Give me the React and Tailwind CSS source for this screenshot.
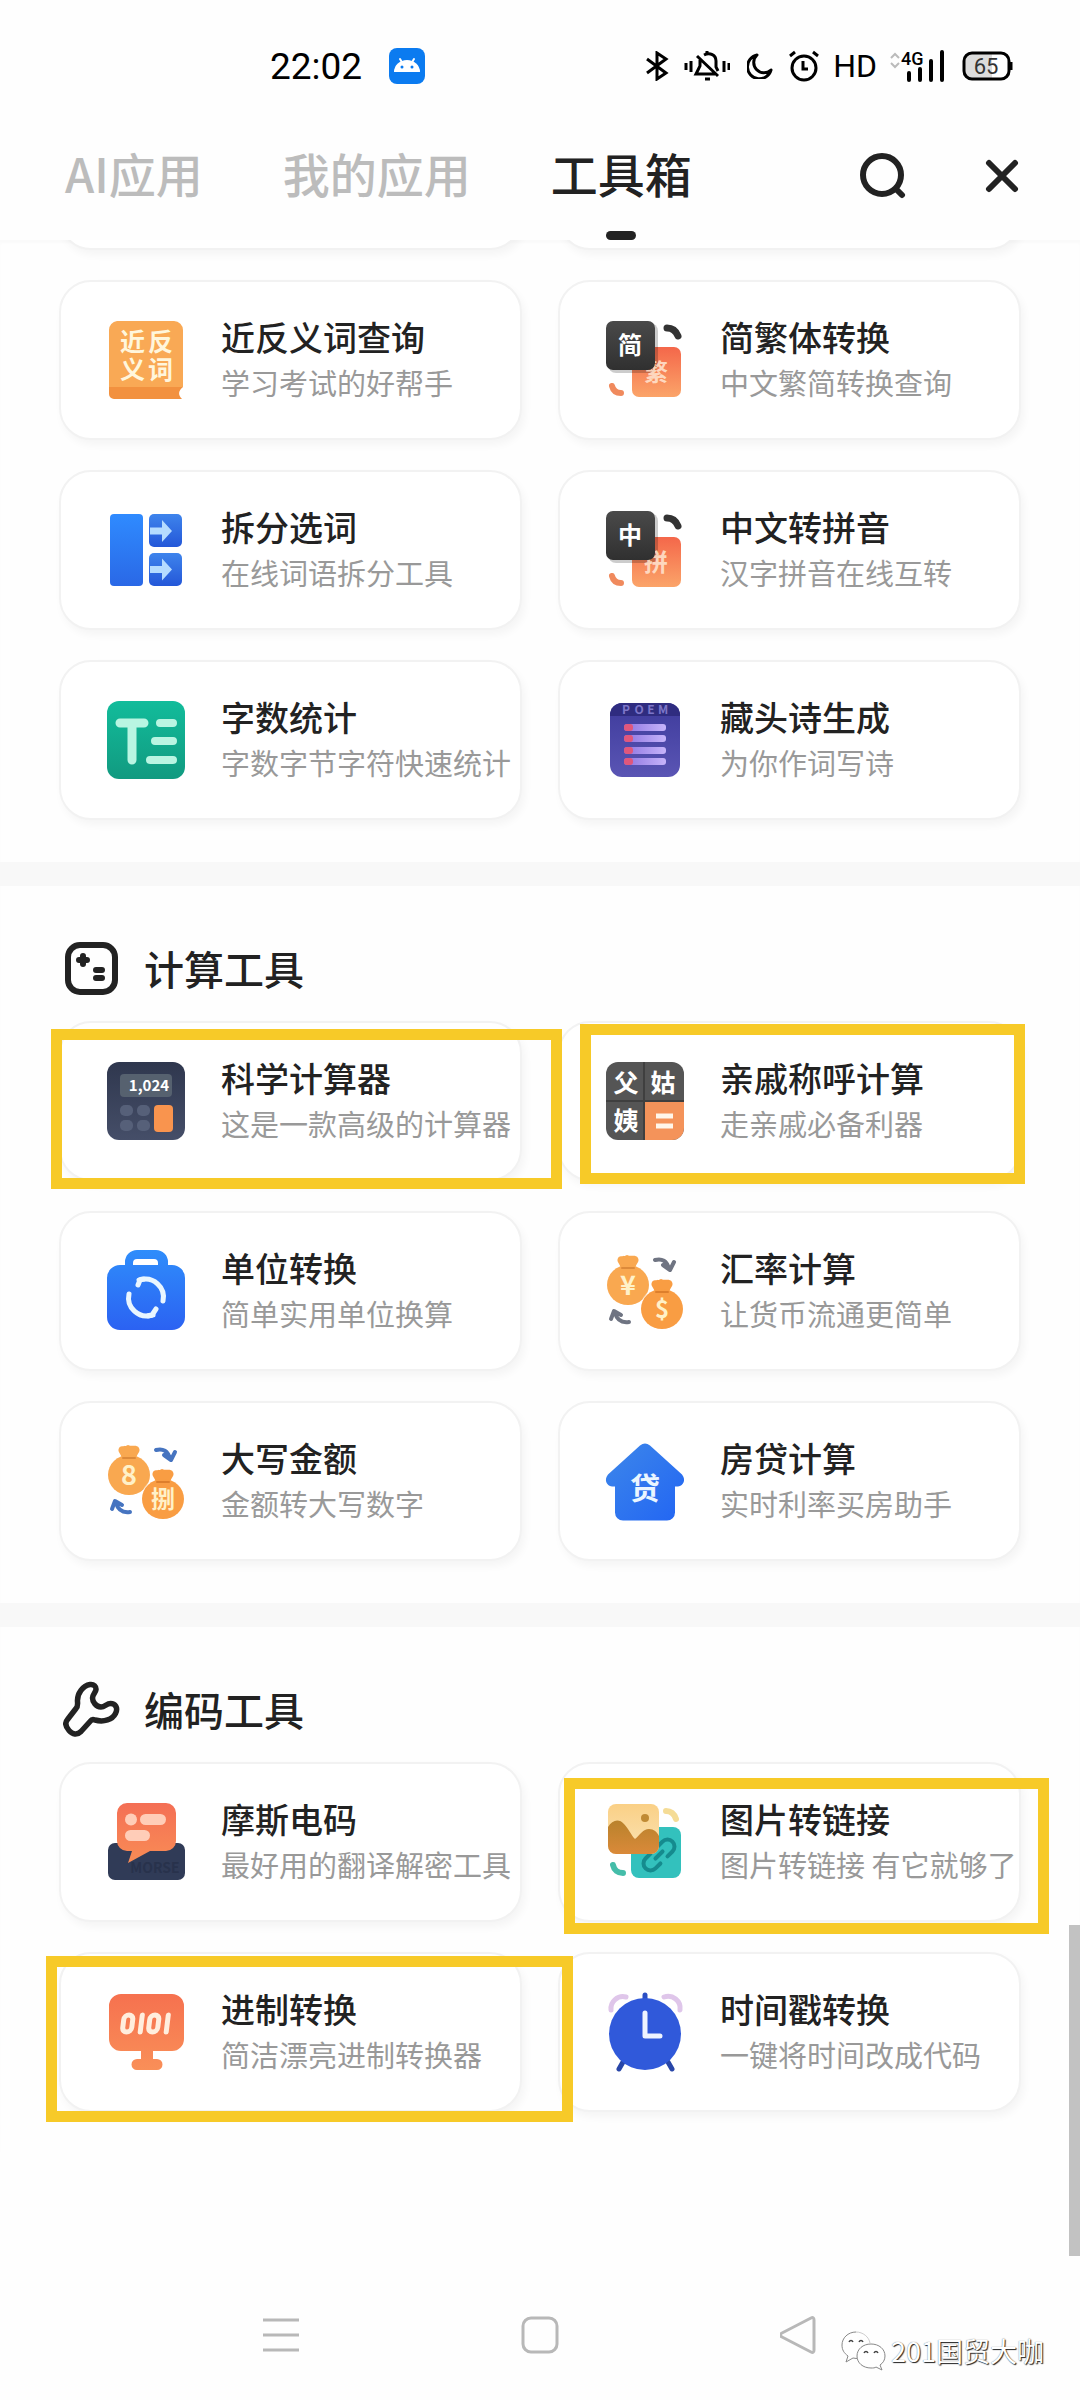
import React from "react";

/* ---------- shared glyph text for the illustrated icons ---------- */

function Glyph({ x, y, size = 24, fill = "#fff", opacity = 1, children }) {
  return (
    <text
      x={x}
      y={y}
      fontSize={size}
      fontWeight="700"
      textAnchor="middle"
      fill={fill}
      fillOpacity={opacity}
    >
      {children}
    </text>
  );
}

function Icon({ children }) {
  return (
    <svg viewBox="0 0 78 78" className="size-[78px] shrink-0 overflow-visible" aria-hidden="true">
      {children}
    </svg>
  );
}

function Gradient({ id, from, to, diagonal = false }) {
  return (
    <linearGradient id={id} x1="0" y1="0" x2={diagonal ? "1" : "0"} y2="1">
      <stop offset="0" stopColor={from} />
      <stop offset="1" stopColor={to} />
    </linearGradient>
  );
}

/* ---------- word tools ---------- */

function BookIcon() {
  return (
    <Icon>
      <path d="M10 0h57a9 9 0 0 1 9 9v57H2V9a9 9 0 0 1 8-9z" fill="#f9a955" />
      <path d="M2 66h74c-5 4-5 8-1 12H7a5 5 0 0 1-5-5z" fill="#f2913f" />
      <text fontSize="25" fontWeight="700" fill="#fff6dc">
        <tspan x="13 41" y="30">近反</tspan>
        <tspan x="13 41" y="58">义词</tspan>
      </text>
    </Icon>
  );
}

function SplitIcon() {
  return (
    <Icon>
      <defs>
        <Gradient id="split-a" from="#2f8bff" to="#2a68e6" />
        <Gradient id="split-b" from="#3e84ec" to="#2457d8" />
      </defs>
      <rect x="3" y="3" width="33" height="72" rx="4" fill="url(#split-a)" />
      <rect x="42" y="3" width="33" height="33" rx="5" fill="url(#split-b)" />
      <rect x="42" y="42" width="33" height="33" rx="5" fill="url(#split-b)" />
      <path d="M43 16.500h12V9l10 11-10 11v-7.500H43z" fill="#b5dcff" />
      <path d="M43 55h12v-7.500l10 11-10 11V62H43z" fill="#b5dcff" />
    </Icon>
  );
}

function CountIcon() {
  return (
    <Icon>
      <defs>
        <Gradient id="count-a" from="#12bc9b" to="#119a80" />
      </defs>
      <rect width="78" height="78" rx="12" fill="url(#count-a)" />
      <g stroke="#b9f5e2" strokeWidth="9" strokeLinecap="round">
        <path d="M13 22h24M25 22v37" />
        <path d="M53 22h13M48 40h18M43 59h23" strokeWidth="8" />
      </g>
    </Icon>
  );
}

function SwapTilesIcon({ id, first, second }) {
  return (
    <Icon>
      <defs>
        <Gradient id={id} from="#f4674a" to="#fba469" />
        <Gradient id={id + "-dark"} from="#4a4a4a" to="#303030" />
      </defs>
      <rect x="26" y="26" width="49" height="50" rx="7" fill={`url(#${id})`} />
      <rect x="2" y="2" width="50" height="50" rx="8" fill="#000" fillOpacity="0.2" />
      <Glyph x={50} y={60} fill="#ffe6d2" opacity={0.85}>{second}</Glyph>
      <rect width="49" height="49" rx="7" fill={`url(#${id}-dark)`} />
      <Glyph x={24} y={33}>{first}</Glyph>
      <path d="M61 7c5 0 9 3 11 8" fill="none" stroke="#333" strokeWidth="7" strokeLinecap="round" />
      <path d="M6 65c1 4 4 7 9 7" fill="none" stroke="#f08a5d" strokeWidth="6" strokeLinecap="round" />
    </Icon>
  );
}

function PoemIcon() {
  return (
    <Icon>
      <defs>
        <Gradient id="poem-a" from="#3e3b9c" to="#5a55b4" />
        <linearGradient id="poem-b" x1="0" y1="0" x2="1" y2="0">
          <stop offset="0" stopColor="#8e74e0" />
          <stop offset="1" stopColor="#c6b4fa" />
        </linearGradient>
      </defs>
      <rect x="4" y="2" width="70" height="74" rx="12" fill="url(#poem-a)" />
      <path d="M4 15v-1A12 12 0 0 1 16 2h46a12 12 0 0 1 12 12v1z" fill="#2f2c80" />
      <Glyph x={20} y={13} size={12} fill="#7d76c8">P</Glyph>
      <Glyph x={33} y={13} size={12} fill="#7d76c8">O</Glyph>
      <Glyph x={45} y={13} size={12} fill="#7d76c8">E</Glyph>
      <Glyph x={57} y={13} size={12} fill="#7d76c8">M</Glyph>
      {[23, 34, 46, 57].map((y) => (
        <g key={y}>
          <rect x="18" y={y} width="42" height="7" rx="3" fill="url(#poem-b)" />
          <rect x="18" y={y} width="9" height="7" rx="3" fill="#e0577c" />
        </g>
      ))}
    </Icon>
  );
}

/* ---------- calculation tools ---------- */

function CalculatorIcon() {
  return (
    <Icon>
      <defs>
        <Gradient id="calc-a" from="#2f374e" to="#454e68" />
      </defs>
      <rect width="78" height="78" rx="12" fill="url(#calc-a)" />
      <rect x="13" y="12" width="52" height="23" rx="4" fill="#56616f" />
      <Glyph x={42} y={29} size={15}>1,024</Glyph>
      <g fill="#566079">
        <rect x="13" y="43" width="13" height="11" rx="5" />
        <rect x="30" y="43" width="13" height="11" rx="5" />
        <rect x="13" y="58" width="13" height="11" rx="5" />
        <rect x="30" y="58" width="13" height="11" rx="5" />
      </g>
      <rect x="47" y="43" width="19" height="27" rx="4" fill="#f9944e" />
    </Icon>
  );
}

function KinshipIcon() {
  return (
    <Icon>
      <rect width="78" height="78" rx="12" fill="#555" />
      <path d="M39 39h39v27a12 12 0 0 1-12 12H39z" fill="#f4935a" />
      <path d="M38 0v78M0 39h78" stroke="#3f3f3f" strokeWidth="2" />
      <Glyph x={20} y={30} size={25}>父</Glyph>
      <Glyph x={57} y={30} size={25}>姑</Glyph>
      <Glyph x={20} y={68} size={25}>姨</Glyph>
      <path d="M50 54h17M50 64h17" stroke="#fff6ea" strokeWidth="5" />
    </Icon>
  );
}

function UnitIcon() {
  return (
    <Icon>
      <defs>
        <Gradient id="unit-a" from="#2f8dfb" to="#2b62f2" />
      </defs>
      <path
        d="M18 13v-3A12 12 0 0 1 30-2h19a12 12 0 0 1 12 12v3h4a13 13 0 0 1 13 13v39a13 13 0 0 1-13 13H13A13 13 0 0 1 0 65V26a13 13 0 0 1 13-13zM30 7a4 4 0 0 0-4 4v2h25v-2a4 4 0 0 0-4-4z"
        fill="url(#unit-a)"
        fillRule="evenodd"
      />
      <g fill="none" stroke="#e9f6ff" strokeWidth="5" strokeLinecap="round" strokeLinejoin="round">
        <path d="M31 33l2-5a18 18 0 0 1 23 21" />
        <path d="M49 57l-4 6a18 18 0 0 1-23-21" />
        <path d="M32 28a18 18 0 0 1 5-1M46 63a18 18 0 0 1-5 1" />
      </g>
    </Icon>
  );
}

function Bag({ cx, cy, fill }) {
  return (
    <g fill={fill}>
      <path
        d={`M${cx - 10} ${cy - 27}c2-3 6-1 9-3 4 2 9-1 11 3 2 4-2 5-3 11h-14c-1-6-5-7-3-11z`}
      />
      <ellipse cx={cx} cy={cy} rx="21" ry="20" />
    </g>
  );
}

function MoneySwapIcon({ first, second, arrow }) {
  return (
    <Icon>
      <Bag cx={22} cy={33} fill="#f9a850" />
      <path d="M16 16h12" stroke="#dd8a3a" strokeWidth="2" strokeLinecap="round" />
      <circle cx="56" cy="57" r="22" fill="#fff" fillOpacity="0.5" />
      <Bag cx={56} cy={57} fill="#f99d43" />
      <path d="M50 40h12" stroke="#dd7f2c" strokeWidth="2" strokeLinecap="round" />
      <Glyph x={22} y={43} size={27} fill="#fff1c8">{first}</Glyph>
      <Glyph x={56} y={66} size={24} fill="#fff1c8">{second}</Glyph>
      <g fill="none" stroke={arrow} strokeWidth="4" strokeLinecap="round" strokeLinejoin="round">
        <path d="M49 8c7-2 12 1 14 9M57 13l7 5 4-8" />
        <path d="M23 70c-7 1-12-2-14-9M5 67l3-8 7 4" />
      </g>
    </Icon>
  );
}

function HouseIcon() {
  return (
    <Icon>
      <defs>
        <Gradient id="house-a" from="#3d87ea" to="#2265f3" diagonal />
      </defs>
      <path
        d="M34 3.500a8 8 0 0 1 10 0l32 29c4 5 2 11-4 12h-3v26a8 8 0 0 1-8 8H17a8 8 0 0 1-8-8v-26H6c-6-1-8-7-4-12z"
        fill="url(#house-a)"
      />
      <Glyph x={39} y={57} size={30} fill="#eaf6ff">贷</Glyph>
    </Icon>
  );
}

/* ---------- encoding tools ---------- */

function MorseIcon() {
  return (
    <Icon>
      <defs>
        <Gradient id="morse-a" from="#f46f55" to="#f98c55" />
      </defs>
      <rect x="1" y="40" width="77" height="37" rx="7" fill="#303b57" />
      <Glyph x={48} y={70} size={14} fill="#28324c">MORSE</Glyph>
      <path
        d="M20 0h39a10 10 0 0 1 10 10v28a10 10 0 0 1-10 10H43L21 60l4-12h-5a10 10 0 0 1-10-10V10A10 10 0 0 1 20 0z"
        fill="url(#morse-a)"
      />
      <g fill="#ffcdb8">
        <circle cx="24" cy="16.500" r="6" />
        <rect x="33" y="11" width="26" height="11" rx="5.500" />
        <rect x="18" y="27" width="25" height="11" rx="5.500" />
      </g>
    </Icon>
  );
}

function ImageLinkIcon() {
  return (
    <Icon>
      <defs>
        <Gradient id="img-a" from="#fad086" to="#fbe3b4" />
        <Gradient id="img-b" from="#b9822c" to="#dc8a3a" />
        <clipPath id="img-clip">
          <rect x="2" y="1" width="51" height="50" rx="8" />
        </clipPath>
      </defs>
      <rect x="25" y="24" width="50" height="51" rx="8" fill="#33c1bd" />
      <g transform="rotate(-45 53 52)" fill="none" stroke="#158b8e" strokeWidth="4" strokeLinecap="round">
        <path d="M48 45h-7a7 7 0 0 0 0 14h7M58 45h7a7 7 0 0 1 0 14h-7M48 52h10" />
      </g>
      <g clipPath="url(#img-clip)">
        <rect x="2" y="1" width="51" height="50" fill="url(#img-a)" />
        <path d="M2 24c4-7 11-9 16-3 5 5 7 11 11 15 5-4 8-10 14-10 5 0 8 3 10 7v20H2z" fill="url(#img-b)" />
        <circle cx="39" cy="15" r="4" fill="#c08a34" />
      </g>
      <path d="M60 8c5 0 8 2 10 8" fill="none" stroke="#f5dc96" strokeWidth="6" strokeLinecap="round" />
      <path d="M7 62c1 5 5 8 10 8" fill="none" stroke="#45bda9" strokeWidth="6" strokeLinecap="round" />
    </Icon>
  );
}

function BinaryIcon() {
  return (
    <Icon>
      <defs>
        <Gradient id="bin-a" from="#f6714f" to="#f98f58" />
      </defs>
      <path
        d="M14 1h51a12 12 0 0 1 12 12v33a12 12 0 0 1-12 12H46v8h4a5.500 5.500 0 0 1 0 11H30a5.500 5.500 0 0 1 0-11h4v-8H14A12 12 0 0 1 2 46V13A12 12 0 0 1 14 1z"
        fill="url(#bin-a)"
      />
      <g transform="skewX(-7)" fill="none" stroke="#ffeedd" strokeWidth="5" strokeLinecap="round">
        <rect x="20" y="22" width="9" height="17" rx="4.500" />
        <path d="M38 22v17" />
        <rect x="46" y="22" width="9" height="17" rx="4.500" />
        <path d="M64 22v17" />
      </g>
    </Icon>
  );
}

function ClockIcon() {
  return (
    <Icon>
      <path d="M5 17A12 12 0 0 1 20 4M74 17A12 12 0 0 0 58 4" fill="none" stroke="#dfc6ea" strokeWidth="5" strokeLinecap="round" />
      <path d="M39 2v6" stroke="#2b4fc4" strokeWidth="5" strokeLinecap="round" />
      <path d="M17 69l-4 7M62 69l4 7" stroke="#2846a8" strokeWidth="5" strokeLinecap="round" />
      <circle cx="39" cy="41" r="36" fill="#3059da" />
      <path d="M39 20v23h15" fill="none" stroke="#eef4ff" strokeWidth="5" strokeLinecap="round" strokeLinejoin="round" />
    </Icon>
  );
}

/* ---------- section heading icons ---------- */

function CalcHeadingIcon() {
  return (
    <svg viewBox="0 0 57 57" className="size-[57px]" fill="none" stroke="#222" strokeLinecap="round" aria-hidden="true">
      <rect x="5" y="5" width="47" height="47" rx="12" strokeWidth="6" />
      <path d="M20 16v8M16 20h8" strokeWidth="6" />
      <path d="M33 30h6M33 38h6" strokeWidth="6" />
    </svg>
  );
}

function WrenchHeadingIcon() {
  return (
    <svg viewBox="0 0 57 57" className="size-[57px]" fill="none" stroke="#222" strokeWidth="5.500" strokeLinejoin="round" aria-hidden="true">
      <path d="M27 3.500c-7 1-13 9-12.500 17 .2 3.500.5 5-1.500 7L4.500 38.500c-3 3.500-2 7 1.500 11s8 5 12 1l9.500-10.500c1-1.500 3-1.500 4.500-1 9 2.500 17.500-.5 20.500-6.500 3-6-.5-10-5-10-4 0-5.500 3.500-9.500 3.500-5-.3-8.500-5-8.500-9 0-3.500 3-5 3.500-8.500.2-3-2-5.500-6-5z" />
    </svg>
  );
}

/* ---------- data ---------- */

const SECTIONS = [
  {
    id: "words",
    tools: [
      { name: "近反义词查询", desc: "学习考试的好帮手", icon: <BookIcon /> },
      { name: "简繁体转换", desc: "中文繁简转换查询", icon: <SwapTilesIcon id="jf" first="简" second="繁" /> },
      { name: "拆分选词", desc: "在线词语拆分工具", icon: <SplitIcon /> },
      { name: "中文转拼音", desc: "汉字拼音在线互转", icon: <SwapTilesIcon id="py" first="中" second="拼" /> },
      { name: "字数统计", desc: "字数字节字符快速统计", icon: <CountIcon /> },
      { name: "藏头诗生成", desc: "为你作词写诗", icon: <PoemIcon /> },
    ],
  },
  {
    id: "calc",
    title: "计算工具",
    icon: <CalcHeadingIcon />,
    tools: [
      { name: "科学计算器", desc: "这是一款高级的计算器", icon: <CalculatorIcon />, mark: "-left-[8px] -right-[40px] top-[8px] -bottom-[8px]" },
      { name: "亲戚称呼计算", desc: "走亲戚必备利器", icon: <KinshipIcon />, mark: "left-[22px] -right-[4px] top-[3px] -bottom-[3px]" },
      { name: "单位转换", desc: "简单实用单位换算", icon: <UnitIcon /> },
      { name: "汇率计算", desc: "让货币流通更简单", icon: <MoneySwapIcon first="¥" second="$" arrow="#6f7482" /> },
      { name: "大写金额", desc: "金额转大写数字", icon: <MoneySwapIcon first="8" second="捌" arrow="#4674c0" /> },
      { name: "房贷计算", desc: "实时利率买房助手", icon: <HouseIcon /> },
    ],
  },
  {
    id: "code",
    title: "编码工具",
    icon: <WrenchHeadingIcon />,
    tools: [
      { name: "摩斯电码", desc: "最好用的翻译解密工具", icon: <MorseIcon /> },
      { name: "图片转链接", desc: "图片转链接 有它就够了", icon: <ImageLinkIcon />, mark: "left-[6px] -right-[28px] top-[16px] -bottom-[12px]" },
      { name: "进制转换", desc: "简洁漂亮进制转换器", icon: <BinaryIcon />, mark: "-left-[13px] -right-[51px] top-[4px] -bottom-[10px]" },
      { name: "时间戳转换", desc: "一键将时间改成代码", icon: <ClockIcon /> },
    ],
  },
];

/* ---------- layout pieces ---------- */

const CARD = "w-full h-[160px] rounded-[32px] border-2 border-[#f2f2f2] bg-white shadow-[3px_5px_8px_rgba(0,0,0,0.04)]";

function ToolCard({ tool }) {
  return (
    <li className="relative">
      <button type="button" className={`${CARD} flex items-center gap-[36px] pl-[46px] text-left`}>
        {tool.icon}
        <span className="flex flex-col pb-[2px] whitespace-nowrap">
          <span className="text-[34px] leading-[46px] font-medium text-[#222]">{tool.name}</span>
          <span className="text-[29px] leading-[44px] text-[#999]">{tool.desc}</span>
        </span>
      </button>
      {tool.mark && (
        <span className={`pointer-events-none absolute z-10 border-[11px] border-[#f7ca28] ${tool.mark}`} />
      )}
    </li>
  );
}

function Section({ section }) {
  return (
    <section>
      {section.title && (
        <h2 className="mt-[42px] border-t-[24px] border-[#f8f8f8] pt-[55px] pb-[26px]">
          <span className="flex h-[54px] items-center gap-[24px] pl-[63px] text-[40px] font-medium text-[#222]">
            {section.icon}
            {section.title}
          </span>
        </h2>
      )}
      <ul className="grid grid-cols-2 gap-x-[36px] gap-y-[30px] px-[59px]">
        {section.tools.map((tool) => (
          <ToolCard key={tool.name} tool={tool} />
        ))}
      </ul>
    </section>
  );
}

function StatusBar() {
  return (
    <div className="flex h-[112px] items-center pt-5 pr-[67px] pl-[270px] font-['Roboto',sans-serif] text-black">
      <time className="text-[37px] leading-none">22:02</time>
      <svg viewBox="0 0 36 36" className="ml-[27px] size-[36px]" aria-hidden="true">
        <rect width="36" height="36" rx="8" fill="#0b7bf0" />
        <path d="M5 24a13 12 0 0 1 26 0z" fill="#fff" />
        <path d="M11 11l3 5M25 11l-3 5" stroke="#fff" strokeWidth="2" strokeLinecap="round" />
        <circle cx="13" cy="19" r="1.500" fill="#0b7bf0" />
        <circle cx="23" cy="19" r="1.500" fill="#0b7bf0" />
      </svg>
      <div className="ml-auto flex items-center">
        <svg viewBox="0 0 24 30" className="h-[30px] w-[24px]" fill="none" stroke="#000" strokeWidth="3" aria-hidden="true">
          <path d="M2 8l19 14-9 6V2l9 6L2 22" />
        </svg>
        <svg viewBox="0 0 46 30" className="ml-[15px] h-[30px] w-[46px]" fill="none" stroke="#000" strokeWidth="3" aria-hidden="true">
          <path d="M2 12v7M7 10v11M40 10v11M45 12v7" />
          <path d="M16 9v6l-4 8h19M20 4c6-3 12 0 12 6v6l2 4M13 5l21 20" />
          <path d="M21 28h5M23 0v3" />
        </svg>
        <svg viewBox="0 0 26 26" className="ml-[17px] size-[26px]" fill="none" stroke="#000" strokeWidth="3" strokeLinejoin="round" aria-hidden="true">
          <path d="M10 2A12 12 0 1 0 24 17 10 10 0 0 1 10 2z" />
        </svg>
        <svg viewBox="0 0 32 32" className="ml-[15px] size-[32px]" fill="none" stroke="#000" strokeWidth="3" aria-hidden="true">
          <circle cx="16" cy="18" r="12" />
          <path d="M15 11v8h5M2 6l5-4M30 6l-5-4" />
        </svg>
        <span className="ml-[13px] text-[32px] leading-none">HD</span>
        <svg viewBox="0 0 58 34" className="ml-[12px] h-[34px] w-[58px]" aria-hidden="true">
          <path d="M2 9l4-4 4 4M2 14l4 4 4-4" fill="none" stroke="#bbb" strokeWidth="2" />
          <text x="12" y="16" fontSize="18" fontWeight="500">4G</text>
          <path d="M20 24v7M31 20v11M42 12v19M53 3v28" stroke="#000" strokeWidth="4" strokeLinecap="round" />
        </svg>
        <svg viewBox="0 0 51 30" className="ml-[15px] h-[30px] w-[51px]" aria-hidden="true">
          <rect x="2" y="2" width="45" height="26" rx="8" fill="#fff" />
          <path d="M10 2h20v26H10a8 8 0 0 1-8-8V10a8 8 0 0 1 8-8z" fill="#dcdcdc" />
          <rect x="2" y="2" width="45" height="26" rx="8" fill="none" stroke="#000" strokeWidth="3" />
          <path d="M49 11v8" stroke="#000" strokeWidth="3" />
          <text x="24" y="23" fontSize="22" textAnchor="middle" fill="#333">65</text>
        </svg>
      </div>
    </div>
  );
}

function TabBar() {
  return (
    <div className="flex h-[128px] items-center pr-[60px] pl-[65px]">
      <nav className="flex h-full gap-[80px] text-[47px] font-medium whitespace-nowrap">
        <button type="button" className="pb-[6px] text-[#bcbcbc]">AI应用</button>
        <button type="button" className="pb-[6px] text-[#bcbcbc]">我的应用</button>
        <button type="button" className="relative pb-[6px] text-[#222]" aria-current="page">
          工具箱
          <span className="absolute bottom-0 left-1/2 h-[9px] w-[30px] -translate-x-1/2 rounded-full bg-[#222]" />
        </button>
      </nav>
      <button type="button" aria-label="搜索" className="ml-auto">
        <svg viewBox="0 0 46 46" className="size-[46px]" fill="none" stroke="#222" strokeWidth="6" strokeLinecap="round">
          <circle cx="22" cy="22" r="19" />
          <path d="M36 36l6 6" />
        </svg>
      </button>
      <button type="button" aria-label="关闭" className="ml-[78px]">
        <svg viewBox="0 0 36 36" className="size-[36px]" fill="none" stroke="#222" strokeWidth="6" strokeLinecap="round">
          <path d="M5 5l26 26M31 5L5 31" />
        </svg>
      </button>
    </div>
  );
}

function SystemNav() {
  return (
    <nav className="mt-auto grid h-[130px] grid-cols-3 place-items-center px-[152px] text-[#b8b8b8]">
      <button type="button" aria-label="最近任务">
        <svg viewBox="0 0 38 38" className="size-[38px]" stroke="currentColor" strokeWidth="3">
          <path d="M1 4h36M1 19h36M1 34h36" />
        </svg>
      </button>
      <button type="button" aria-label="主页">
        <svg viewBox="0 0 38 38" className="size-[38px]" fill="none" stroke="currentColor" strokeWidth="3">
          <rect x="2" y="2" width="34" height="34" rx="8" />
        </svg>
      </button>
      <button type="button" aria-label="返回">
        <svg viewBox="0 0 38 38" className="size-[38px]" fill="none" stroke="currentColor" strokeWidth="3" strokeLinejoin="round">
          <path d="M31 2c2-1 3 0 3 2v30c0 2-1 3-3 2L2 21c-2-1-2-3 0-4z" />
        </svg>
      </button>
    </nav>
  );
}

function Watermark() {
  return (
    <div className="absolute right-[36px] bottom-[28px] flex items-center gap-[5px]">
      <svg viewBox="0 0 46 42" className="h-[42px] w-[46px]" fill="#fff" stroke="#888" strokeWidth="1" aria-hidden="true">
        <path d="M16 2C8 2 2 8 2 15c0 5 2 8 6 11l-2 6 7-4c2 .5 4 .6 6 .3" />
        <path d="M16 2c7 0 13 5 14 11" stroke="#ccc" />
        <path d="M31 14c-8 0-14 5-14 12s6 12 14 12c2 0 4 0 5-1l6 3-2-5c3-2 5-5 5-9 0-7-6-12-14-12z" />
        <path d="M9 12c1-2 3-2 4 0M19 12c1-2 3-2 4 0M24 23c1-2 3-2 4 0M34 23c1-2 3-2 4 0" fill="none" stroke="#444" strokeWidth="1.500" />
      </svg>
      <span className="text-[27px] leading-[40px] text-white [text-shadow:1px_1px_1px_#222,0px_0px_1px_#666]">201国贸大咖</span>
    </div>
  );
}

export default function App() {
  return (
    <div className="relative flex min-h-screen flex-col bg-[#fefefe] font-['Noto_Sans_CJK_SC',sans-serif]">
      <header className="bg-[#fefefe]">
        <StatusBar />
        <TabBar />
      </header>
      <main className="overflow-hidden pb-[40px] shadow-[inset_0_3px_3px_rgba(0,0,0,0.02)]">
        {/* tail of the row that has scrolled under the header */}
        <div className="-mt-[150px] mb-[30px] grid grid-cols-2 gap-x-[36px] px-[59px]" aria-hidden="true">
          <div className={CARD} />
          <div className={CARD} />
        </div>
        {SECTIONS.map((section) => (
          <Section key={section.id} section={section} />
        ))}
      </main>
      <SystemNav />
      <div className="absolute top-[1925px] right-0 h-[331px] w-[11px] bg-[#c2c2c2]" />
      <Watermark />
    </div>
  );
}
